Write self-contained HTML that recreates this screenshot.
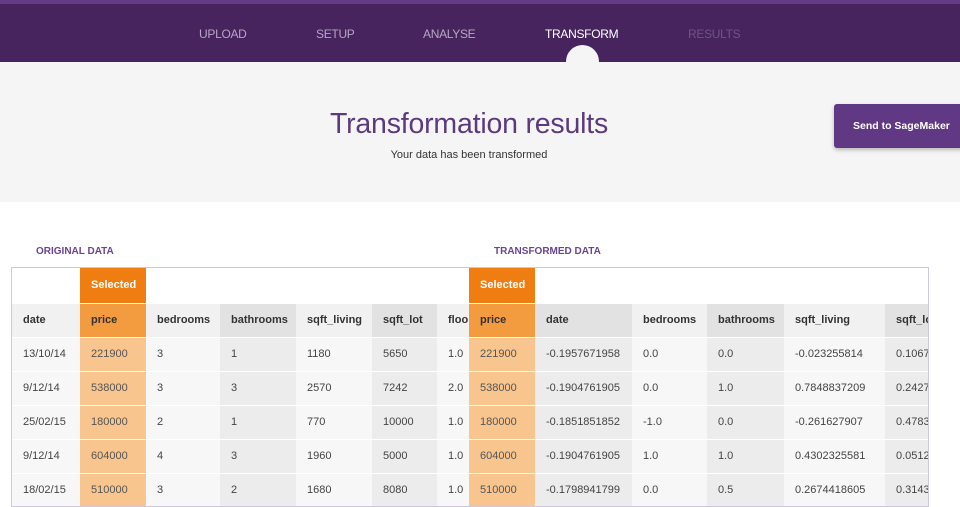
<!DOCTYPE html>
<html><head><style>
*{margin:0;padding:0;box-sizing:border-box}
body{width:960px;height:498px;overflow:hidden;background:#fff;font-family:"Liberation Sans",sans-serif;position:relative}
.hdr{position:absolute;left:0;top:0;width:960px;height:62px;background:#47245e;border-top:4px solid #643a85}
.nav{position:absolute;top:27px;font-size:12px;color:#b7a6c4;letter-spacing:-0.3px}
.gray{position:absolute;left:0;top:62px;width:960px;height:140px;background:#f5f5f5}
.dot{position:absolute;left:566px;top:45px;width:33px;height:33px;border-radius:50%;background:#f5f5f5}
h1{position:absolute;top:108px;left:0;width:938px;text-align:center;font-weight:normal;font-size:28.5px;color:#5d3a7e;letter-spacing:-0.2px}
.sub{position:absolute;top:149px;width:938px;text-align:center;font-size:11px;color:#333}
.btn{position:absolute;left:834px;top:104px;width:130px;height:44px;background:#613883;border-radius:3px;color:#fff;font-size:10.5px;line-height:44px;padding-left:19px;font-weight:bold;box-shadow:0 2px 4px rgba(0,0,0,.25)}
.lbl{position:absolute;top:246px;font-size:10px;font-weight:bold;color:#6a4592}
.box{position:absolute;left:11px;top:267px;width:918px;height:240px;border:1px solid #cfc8da;overflow:hidden;background:#fff}
table{position:absolute;left:0;top:0;border-collapse:collapse;table-layout:fixed;width:933px}
td{height:34px;font-size:11px;color:#444;padding-left:11px;white-space:nowrap;overflow:hidden;border-bottom:1px solid #fff}
tr.h td{font-weight:bold;color:#333}
.s{background:#f07d12;color:#fff;font-weight:bold}
.l{background:#f7f7f7}.g{background:#ececec}
tr.h .l{background:#f1f1f1} tr.h .g{background:#e2e2e2}
.p{background:#f8c58e;color:#555} tr.h .p{background:#f39b3f;color:#333}
</style></head><body>
<div class="hdr"></div>
<div class="gray"></div>
<div class="dot"></div>
<div class="nav" style="left:199px">UPLOAD</div>
<div class="nav" style="left:316px">SETUP</div>
<div class="nav" style="left:423px">ANALYSE</div>
<div class="nav" style="left:545px;color:#fff">TRANSFORM</div>
<div class="nav" style="left:688px;color:#6e5580">RESULTS</div>
<h1>Transformation results</h1>
<div class="sub">Your data has been transformed</div>
<div class="btn">Send to SageMaker</div>
<div class="lbl" style="left:36px">ORIGINAL DATA</div>
<div class="lbl" style="left:494px">TRANSFORMED DATA</div>
<div class="box"><table>
<colgroup><col style="width:68px"><col style="width:66px"><col style="width:74px"><col style="width:76px"><col style="width:76px"><col style="width:65px"><col style="width:32px"><col style="width:66px"><col style="width:97px"><col style="width:75px"><col style="width:77px"><col style="width:101px"><col style="width:60px"></colgroup>
<tr><td style="height:35px"></td><td class="s">Selected</td><td></td><td></td><td></td><td></td><td></td><td class="s">Selected</td><td></td><td></td><td></td><td></td><td></td></tr>
<tr class="h"><td class="l">date</td><td class="p">price</td><td class="l">bedrooms</td><td class="g">bathrooms</td><td class="l">sqft_living</td><td class="g">sqft_lot</td><td class="l">floo</td><td class="p">price</td><td class="g">date</td><td class="l">bedrooms</td><td class="g">bathrooms</td><td class="l">sqft_living</td><td class="g">sqft_lot</td></tr>
<tr><td class="l">13/10/14</td><td class="p">221900</td><td class="l">3</td><td class="g">1</td><td class="l">1180</td><td class="g">5650</td><td class="l">1.0</td><td class="p">221900</td><td class="g">-0.1957671958</td><td class="l">0.0</td><td class="g">0.0</td><td class="l">-0.023255814</td><td class="g">0.1067</td></tr>
<tr><td class="l">9/12/14</td><td class="p">538000</td><td class="l">3</td><td class="g">3</td><td class="l">2570</td><td class="g">7242</td><td class="l">2.0</td><td class="p">538000</td><td class="g">-0.1904761905</td><td class="l">0.0</td><td class="g">1.0</td><td class="l">0.7848837209</td><td class="g">0.2427</td></tr>
<tr><td class="l">25/02/15</td><td class="p">180000</td><td class="l">2</td><td class="g">1</td><td class="l">770</td><td class="g">10000</td><td class="l">1.0</td><td class="p">180000</td><td class="g">-0.1851851852</td><td class="l">-1.0</td><td class="g">0.0</td><td class="l">-0.261627907</td><td class="g">0.4783</td></tr>
<tr><td class="l">9/12/14</td><td class="p">604000</td><td class="l">4</td><td class="g">3</td><td class="l">1960</td><td class="g">5000</td><td class="l">1.0</td><td class="p">604000</td><td class="g">-0.1904761905</td><td class="l">1.0</td><td class="g">1.0</td><td class="l">0.4302325581</td><td class="g">0.0512</td></tr>
<tr><td class="l">18/02/15</td><td class="p">510000</td><td class="l">3</td><td class="g">2</td><td class="l">1680</td><td class="g">8080</td><td class="l">1.0</td><td class="p">510000</td><td class="g">-0.1798941799</td><td class="l">0.0</td><td class="g">0.5</td><td class="l">0.2674418605</td><td class="g">0.3143</td></tr>
</table></div>
</body></html>
